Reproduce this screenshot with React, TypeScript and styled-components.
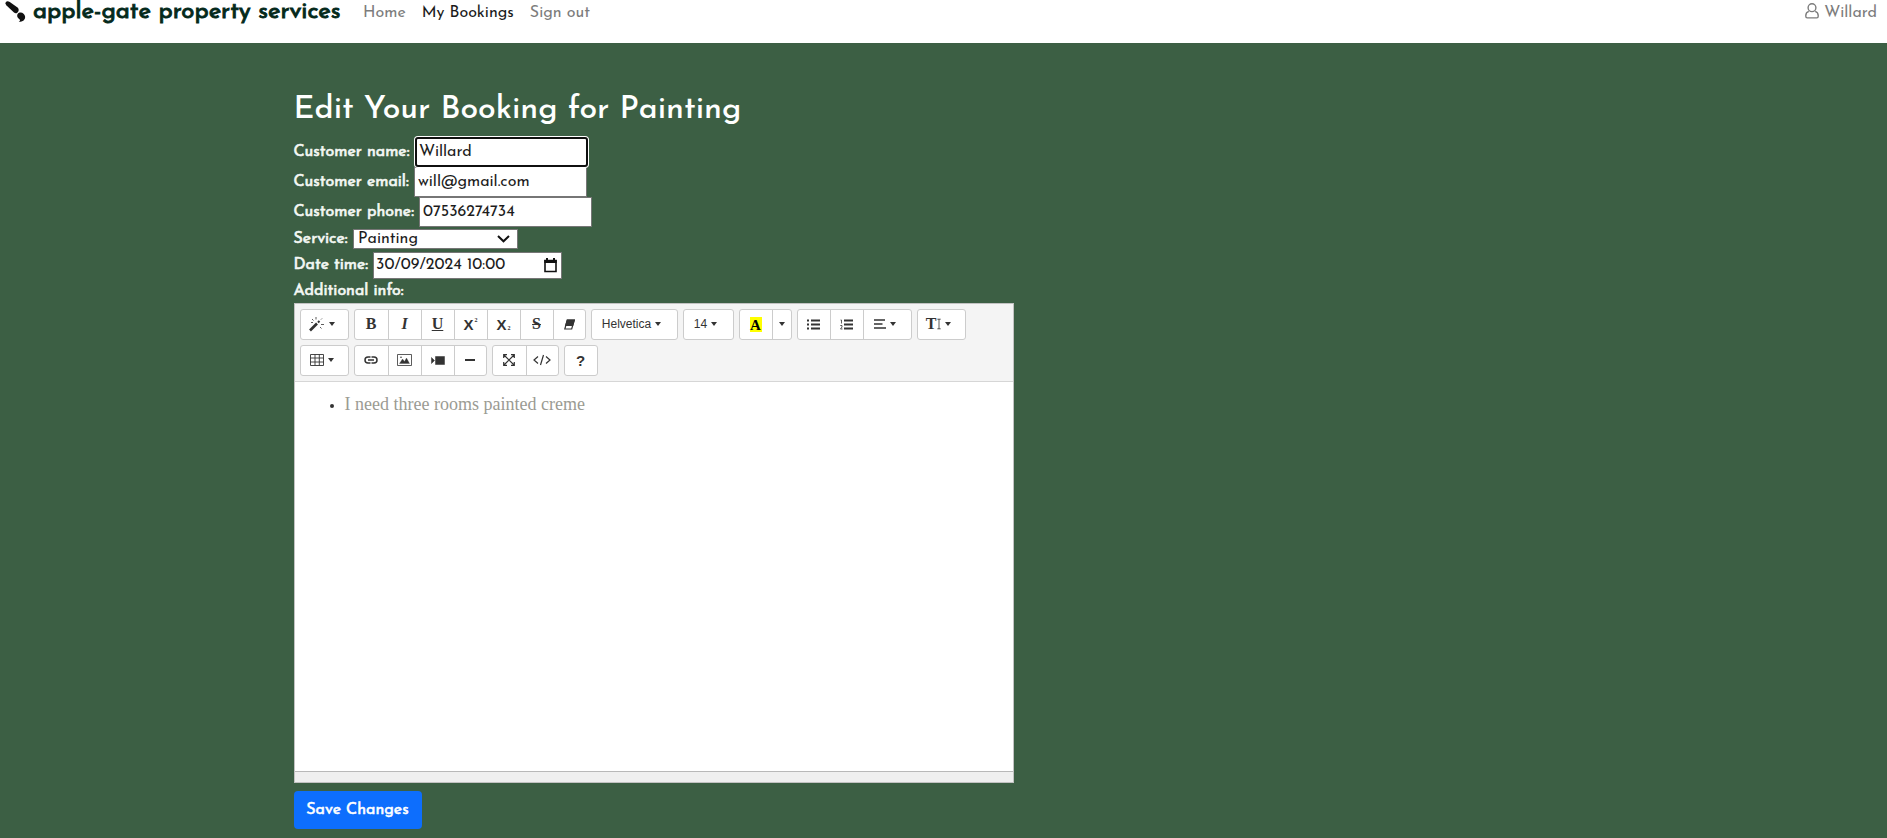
import React from "react";
import styled, { createGlobalStyle, css } from "styled-components";

const Global = createGlobalStyle`
  *, *::before, *::after { box-sizing: border-box; }
  body { margin: 0; background: #3c5f44; font-family: "Josefin Sans", Lato, sans-serif; font-size: 16px; color: #212529; overflow: hidden; }
  input, select, button { font: inherit; color: inherit; letter-spacing: inherit; }
`;

const Page = styled.div`
  height: 838px;
  background: #3c5f44;
`;

const Navbar = styled.header`
  display: flex;
  align-items: flex-start;
  height: 43px;
  padding: 0 10px 0 5px;
  background: #fff;
`;

const Brand = styled.a`
  display: flex;
  height: 24px;
  align-items: center;
  gap: 7px;
  width: 358px;
  color: #04291b;
  font-size: 24px;
  font-weight: 400;
  -webkit-text-stroke: 0.9px #04291b;
  line-height: 24px;
  white-space: nowrap;
`;

const NavLinks = styled.nav`
  display: flex;
  gap: 16px;
  flex: 1;
`;

const NavLink = styled.a<{ $active?: boolean }>`
  color: ${(p) => (p.$active ? "#1a1a1a" : "#7c7c7c")};
  line-height: 26px;
  white-space: nowrap;
`;

const UserLink = styled.div`
  display: flex;
  gap: 5px;
  height: 24px;
  color: #7c7c7c;
  line-height: 26px;
  svg { margin-top: 3px; }
`;

const Main = styled.main`
  width: 720px;
  margin-left: 293.5px;
  padding-top: 46px;
`;

const Title = styled.h1`
  margin: 0;
  height: 47px;
  color: #fff;
  font-size: 32px;
  font-weight: 500;
  line-height: 43px;
  white-space: nowrap;
`;

const Field = styled.div<{ $h: number }>`
  display: flex;
  align-items: center;
  height: ${(p) => p.$h}px;
`;

const Label = styled.label<{ $w: number }>`
  width: ${(p) => p.$w}px;
  flex: none;
  color: #f4f8f4;
  font-weight: 400;
  -webkit-text-stroke: 0.6px #f4f8f4;
  white-space: nowrap;
`;

const box = css`
  background: #fff;
  border: 1px solid #767676;
  border-radius: 0;
  color: #1c1c1c;
`;

const TextInput = styled.input<{ $focus?: boolean }>`
  ${box}
  width: 173px;
  height: 30px;
  padding: 0 3px;
  outline: none;
  ${(p) =>
    p.$focus &&
    css`
      border: 2px solid #101010;
      border-radius: 3px;
      padding: 0 2px;
      box-shadow: 0 0 0 1px #fff;
      position: relative;
      z-index: 1;
    `}
`;

const SelectBox = styled.div`
  ${box}
  display: flex;
  align-items: center;
  justify-content: space-between;
  width: 164.5px;
  height: 20px;
  padding: 0 7px 0 4px;
  line-height: 18px;
`;

const DateBox = styled.div`
  ${box}
  display: flex;
  align-items: center;
  justify-content: space-between;
  width: 188.5px;
  height: 27px;
  padding: 0 4px 0 2px;
  letter-spacing: 0.08px;
`;

const Editor = styled.section`
  display: flex;
  flex-direction: column;
  width: 720px;
  height: 480px;
  background: #fff;
  border: 1px solid #c2c2c2;
`;

const Toolbar = styled.div`
  display: flex;
  flex-direction: column;
  gap: 5px;
  height: 78px;
  padding: 5px 5px 0;
  background: #f4f4f4;
  border-bottom: 1px solid #d6d6d6;
`;

const ToolRow = styled.div`
  display: flex;
  gap: 5px;
`;

const Group = styled.div`
  display: flex;
  height: 31px;
  background: #fff;
  border: 1px solid #ccc;
  border-radius: 3px;
`;

const Tool = styled.button<{ $w: number; $menu?: boolean }>`
  display: flex;
  align-items: center;
  justify-content: center;
  gap: 4px;
  width: ${(p) => p.$w}px;
  padding: 0 ${(p) => (p.$menu ? 5 : 0)}px 1px 0;
  background: none;
  border: 0;
  color: #333;
  font: 12px/1 "Liberation Sans", Arial, sans-serif;
  & + & { border-left: 1px solid #ccc; }
`;

const Glyph = styled.span<{ $italic?: boolean; $line?: string }>`
  font: ${(p) => (p.$italic ? "italic" : "normal")} bold 16px/18px "Liberation Serif", serif;
  text-decoration: ${(p) => p.$line ?? "none"};
`;

const Script = styled.span<{ $shift: string }>`
  display: flex;
  align-items: ${(p) => p.$shift};
  gap: 1px;
  height: 15px;
  font: bold 15px/15px "Liberation Sans", sans-serif;
  small { font: bold 6px/7px "Liberation Serif", serif; }
`;

const Highlight = styled.span`
  width: 12px;
  height: 15px;
  background: #ff0;
  color: #000;
  text-align: center;
  font: bold 15px/16px "Liberation Serif", serif;
`;

const Pair = styled.span`
  display: flex;
  align-items: center;
  gap: 1px;
`;

const Caret = styled.i`
  width: 0;
  border: 3px solid transparent;
  border-top: 4px solid #333;
  border-bottom: 0;
`;

const Content = styled.ul`
  flex: 1;
  margin: 0;
  padding: 11px 0 0 50px;
  font: 14px/22px "Liberation Sans", sans-serif;
  color: #333;
  span { color: #9b9b93; font: 18px/22px "Liberation Serif", serif; }
`;

const StatusBar = styled.div`
  height: 11px;
  background: #efefef;
  border-top: 1px solid #b8b8b8;
`;

const Save = styled.button`
  display: block;
  width: 128px;
  height: 38px;
  margin-top: 8px;
  padding: 0;
  background: #0d6efd;
  border: 0;
  border-radius: 4px;
  color: #fff;
  font-weight: 400;
  -webkit-text-stroke: 0.5px #fff;
`;

const Svg = ({ w = 14, h = 14, children }: { w?: number; h?: number; children: React.ReactNode }) => (
  <svg width={w} height={h} viewBox={`0 0 ${w} ${h}`} fill="none" stroke="#333" strokeWidth="1.2">
    {children}
  </svg>
);

export default function App() {
  return (
    <Page>
      <Global />
      <Navbar>
        <Brand>
          <svg width="21" height="22" viewBox="0 0 21 22" fill="#111">
            <path d="M.8 1.200C1.600-.1 3.200 0 4.800 1L12.200 6.200C13.900 7.500 14.100 9.300 13 11C12 12.500 10.300 12.800 9 11.600L1.500 4.400C.5 3.400.2 2.200.8 1.200Z" />
            <path d="M14 11.800C16.800 10.700 19.700 12.700 20.100 15.500C20.400 18.700 18 20.900 13.700 21C15.300 19.900 15.400 19.100 14.200 18C11.700 16.500 11.500 13 14 11.800Z" />
          </svg>
          <span>apple-gate property services</span>
        </Brand>
        <NavLinks>
          <NavLink>Home</NavLink>
          <NavLink $active>My Bookings</NavLink>
          <NavLink>Sign out</NavLink>
        </NavLinks>
        <UserLink>
          <svg width="14" height="16" viewBox="0 0 14 16" fill="none" stroke="#7c7c7c" strokeWidth="1.4">
            <circle cx="7" cy="4.700" r="3.900" />
            <path d="M3.800 8.300C1.800 9 .8 10.500.8 12.500V13.300C.8 14.300 1.300 14.900 2.200 14.900H11.800C12.700 14.900 13.200 14.300 13.200 13.300V12.500C13.200 10.500 12.200 9 10.200 8.300" />
          </svg>
          <span>Willard</span>
        </UserLink>
      </Navbar>
      <Main>
        <Title>Edit Your Booking for Painting</Title>
        <Field $h={31}>
          <Label $w={121.5}>Customer name:</Label>
          <TextInput $focus defaultValue="Willard" />
        </Field>
        <Field $h={30}>
          <Label $w={120.5}>Customer email:</Label>
          <TextInput defaultValue="will@gmail.com" />
        </Field>
        <Field $h={30}>
          <Label $w={125.5}>Customer phone:</Label>
          <TextInput defaultValue="07536274734" />
        </Field>
        <Field $h={24}>
          <Label $w={59.5}>Service:</Label>
          <SelectBox>
            <span>Painting</span>
            <svg width="13" height="8" viewBox="0 0 13 8" fill="none" stroke="#111" strokeWidth="2">
              <path d="M1 1L6.500 6.300L12 1" />
            </svg>
          </SelectBox>
        </Field>
        <Field $h={28}>
          <Label $w={79.5}>Date time:</Label>
          <DateBox>
            <span>30/09/2024 10:00</span>
            <svg width="13" height="15" viewBox="0 0 13 15">
              <path d="M1 2.500H12V13.500H1Z" fill="none" stroke="#111" strokeWidth="1.600" />
              <path d="M.3 2H12.700V5H.3ZM2 0H4V2H2ZM9 0H11V2H9Z" fill="#111" />
            </svg>
          </DateBox>
        </Field>
        <Field $h={24}>
          <Label $w={120}>Additional info:</Label>
        </Field>
        <Editor>
          <Toolbar>
            <ToolRow>
              <Group>
                <Tool $w={47} $menu>
                  <Svg w={16} h={15}>
                    <path d="M1 13.500L8 6.500" strokeWidth="2.600" />
                    <path d="M9 5.500L10.500 4" strokeWidth="2" />
                    <path d="M7 0V2.500M3 2L4.500 3.500M2 5.500H4M12 7.500H15M11 10L12.500 11.500M12 2.500L13 1.500" strokeWidth=".8" />
                  </Svg>
                  <Caret />
                </Tool>
              </Group>
              <Group>
                <Tool $w={33}><Glyph>B</Glyph></Tool>
                <Tool $w={33}><Glyph $italic>I</Glyph></Tool>
                <Tool $w={33}><Glyph $line="underline">U</Glyph></Tool>
                <Tool $w={33}><Script $shift="flex-start">X<small>2</small></Script></Tool>
                <Tool $w={33}><Script $shift="flex-end">X<small>2</small></Script></Tool>
                <Tool $w={33}><Glyph $line="line-through">S</Glyph></Tool>
                <Tool $w={32}>
                  <Svg w={11} h={11}>
                    <path d="M3.300 1H10.300L7.700 10H.8Z" />
                    <path d="M3.300 1H10.300L8.700 6.500H1.700Z" fill="#333" />
                  </Svg>
                </Tool>
              </Group>
              <Group><Tool $w={85} $menu>Helvetica <Caret /></Tool></Group>
              <Group><Tool $w={49} $menu>14 <Caret /></Tool></Group>
              <Group>
                <Tool $w={32}><Highlight>A</Highlight></Tool>
                <Tool $w={19}><Caret /></Tool>
              </Group>
              <Group>
                <Tool $w={32}>
                  <Svg w={13} h={11}><path d="M4 1.500H13M4 5.500H13M4 9.500H13M0 1.500H2M0 5.500H2M0 9.500H2" strokeWidth="2" /></Svg>
                </Tool>
                <Tool $w={33}>
                  <Svg w={13} h={11}>
                    <path d="M4 1.500H13M4 5.500H13M4 9.500H13" strokeWidth="2" />
                    <path d="M.5 1H1.500V4.500M.3 6.500H2V8L.5 10H2.500" strokeWidth=".8" />
                  </Svg>
                </Tool>
                <Tool $w={48} $menu>
                  <Svg w={12} h={10}><path d="M0 1H11M0 5H8.500M0 9H12" strokeWidth="1.400" /></Svg>
                  <Caret />
                </Tool>
              </Group>
              <Group>
                <Tool $w={47} $menu>
                  <Pair>
                    <Glyph>T</Glyph>
                    <Svg w={4} h={12}><path d="M2 1V11M.3 1.200H3.700M.3 10.800H3.700" strokeWidth=".8" /></Svg>
                  </Pair>
                  <Caret />
                </Tool>
              </Group>
            </ToolRow>
            <ToolRow>
              <Group>
                <Tool $w={47} $menu>
                  <Svg w={14} h={12}><path d="M.5 .5H13.500V11.500H.5ZM.5 4H13.500M.5 8H13.500M5 .5V11.500M9.300 .5V11.500" strokeWidth=".9" /></Svg>
                  <Caret />
                </Tool>
              </Group>
              <Group>
                <Tool $w={33}>
                  <Svg w={14} h={8}><path d="M6.500 7H4A3 3 0 0 1 4 1H6.500M7.500 1H10A3 3 0 0 1 10 7H7.500M4 4H10" strokeWidth="1.500" /></Svg>
                </Tool>
                <Tool $w={33}>
                  <Svg w={15} h={12}>
                    <path d="M.5 .5H14.500V11.500H.5Z" strokeWidth=".8" />
                    <path d="M2.500 9.500L5.500 5L7.500 7.500L9.500 4L12.500 9.500Z" fill="#333" strokeWidth=".3" />
                    <circle cx="4" cy="3.300" r=".8" fill="#333" stroke="none" />
                  </Svg>
                </Tool>
                <Tool $w={33}>
                  <Svg w={14} h={9}><path d="M4.500 .5H13.500V8.500H4.500ZM.5 1.500L3.500 4.500L.5 7.500Z" fill="#333" strokeWidth=".5" /></Svg>
                </Tool>
                <Tool $w={32}><Svg w={10} h={4}><path d="M0 2H10" strokeWidth="2" /></Svg></Tool>
              </Group>
              <Group>
                <Tool $w={33}>
                  <Svg w={12} h={12}><path d="M1 1L11 11M11 1L1 11M.7 4V.7H4M8 .7H11.300V4M.7 8V11.300H4M8 11.300H11.300V8" /></Svg>
                </Tool>
                <Tool $w={32}>
                  <Svg w={18} h={12}><path d="M5 2.500L1 6L5 9.500M13 2.500L17 6L13 9.500M10.500 1L7.500 11" /></Svg>
                </Tool>
              </Group>
              <Group>
                <Tool $w={32}><Script $shift="center">?</Script></Tool>
              </Group>
            </ToolRow>
          </Toolbar>
          <Content><li><span>I need three rooms painted creme</span></li></Content>
          <StatusBar />
        </Editor>
        <Save>Save Changes</Save>
      </Main>
    </Page>
  );
}
